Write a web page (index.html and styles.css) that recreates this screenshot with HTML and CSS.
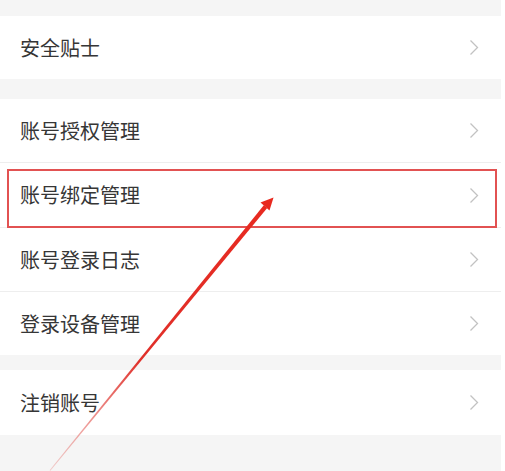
FILE: index.html
```html
<!DOCTYPE html>
<html lang="zh-CN">
<head>
<meta charset="utf-8">
<link rel="stylesheet" href="styles.css">
</head>
<body>
<div class="page">
  <div class="group first">
    <div class="row r63"><span class="label">安全贴士</span><svg class="chev" viewBox="0 0 10 17"><polyline points="1.5,1.5 8.5,8.5 1.5,15.5"/></svg></div>
  </div>
  <div class="group second">
    <div class="row r63 sep"><span class="label">账号授权管理</span><svg class="chev" viewBox="0 0 10 17"><polyline points="1.5,1.5 8.5,8.5 1.5,15.5"/></svg></div>
    <div class="row r64 sep"><span class="label">账号绑定管理</span><svg class="chev" viewBox="0 0 10 17"><polyline points="1.5,1.5 8.5,8.5 1.5,15.5"/></svg></div>
    <div class="row r63 sep"><span class="label">账号登录日志</span><svg class="chev" viewBox="0 0 10 17"><polyline points="1.5,1.5 8.5,8.5 1.5,15.5"/></svg></div>
    <div class="row r63"><span class="label">登录设备管理</span><svg class="chev" viewBox="0 0 10 17"><polyline points="1.5,1.5 8.5,8.5 1.5,15.5"/></svg></div>
  </div>
  <div class="group third">
    <div class="row r65"><span class="label">注销账号</span><svg class="chev" viewBox="0 0 10 17"><polyline points="1.5,1.5 8.5,8.5 1.5,15.5"/></svg></div>
  </div>
</div>
<div class="highlight"></div>
<svg class="arrow" width="505" height="471" viewBox="0 0 505 471">
  <defs>
    <linearGradient id="fade" x1="273" y1="198" x2="50" y2="470" gradientUnits="userSpaceOnUse">
      <stop offset="0" stop-color="#e8291f"/>
      <stop offset="0.6" stop-color="#e0302a"/>
      <stop offset="1" stop-color="#e88a86" stop-opacity="0.4"/>
    </linearGradient>
  </defs>
  <polygon points="267.2,208 263.8,205.2 49.6,470.2 50.4,470.8" fill="url(#fade)"/>
  <polygon points="273.5,197.5 260.5,202.5 269.5,210.5" fill="#e8291f"/>
</svg>
</body>
</html>
```
FILE: styles.css
```css
html, body {
  margin: 0;
  padding: 0;
  background: #ffffff;
}
.page {
  width: 501px;
  height: 471px;
  background: #f5f5f5;
  padding-top: 16px;
  box-sizing: border-box;
  display: flex;
  flex-direction: column;
  font-family: "Noto Sans CJK SC", "Noto Sans", sans-serif;
}
.group {
  background: #ffffff;
  display: flex;
  flex-direction: column;
}
.second { margin-top: 20px; }
.third { margin-top: 15px; }
.row {
  display: flex;
  align-items: center;
  justify-content: space-between;
  padding: 0 22px 0 20px;
  box-sizing: border-box;
}
.r63 { height: 63px; }
.r64 { height: 64px; }
.r65 { height: 65px; }
.sep { border-bottom: 1px solid #eeeeee; }
.sep.r63 { height: 64px; }
.sep.r64 { height: 65px; }
.label {
  font-size: 20px;
  color: #363636;
  line-height: 1;
}
.chev {
  width: 10px;
  height: 17px;
  fill: none;
  stroke: #c2c2c2;
  stroke-width: 1.3;
}
.highlight {
  position: absolute;
  left: 7px;
  top: 169px;
  width: 486px;
  height: 55px;
  border: 2px solid #e25252;
}
.arrow {
  position: absolute;
  left: 0;
  top: 0;
}
```
